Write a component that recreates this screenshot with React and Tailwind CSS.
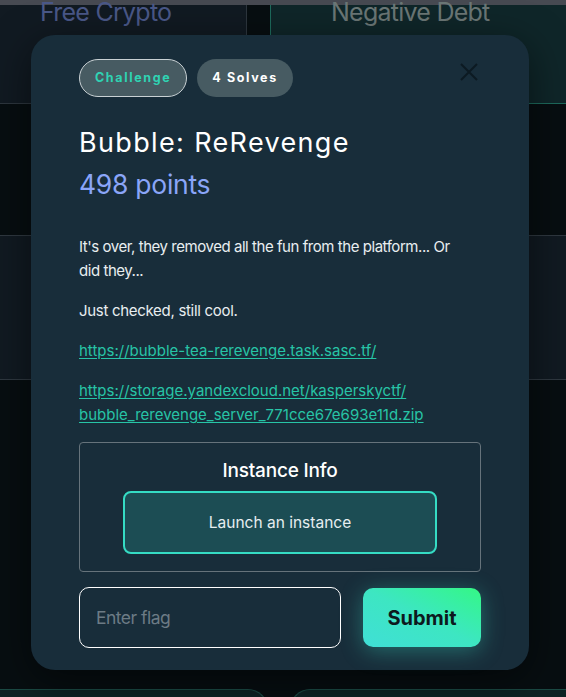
import React, { useState } from 'react';

const font = { fontFamily: 'Inter, "Noto Sans", sans-serif' };

const CloseIcon = () => (
    <svg width="20" height="20" viewBox="0 0 20 20" fill="none" stroke="#0c1a22" strokeWidth="2">
        <path d="M2 2L18 18M18 2L2 18" />
    </svg>
);

const ChallengeModal = () => {
    const [flag, setFlag] = useState("");

    return (
        <div className="absolute left-[31px] top-[35px] w-[498px] h-[635px] rounded-[24px] bg-[#182d3a] shadow-[0_10px_40px_rgba(0,0,0,0.5)] px-[48px] pt-[24px]">
            <div className="flex items-center justify-between">
                <div className="flex gap-[10px]">
                    <span className="h-[38px] px-[15px] flex items-center rounded-full border border-[#c9d1d4] bg-[#475b62] text-[#2fd3b3] text-[12.5px] font-bold tracking-[0.13em]">
                        Challenge
                    </span>
                    <span className="h-[38px] px-[15px] flex items-center rounded-full bg-[#475b62] text-white text-[12.5px] font-bold tracking-[0.13em]">
                        4 Solves
                    </span>
                </div>
                <button className="mr-[2px] mt-[-12px]">
                    <CloseIcon />
                </button>
            </div>

            <h2 className="mt-[29px] text-[27px] leading-[34px] font-normal text-white tracking-[0.05em]">Bubble: ReRevenge</h2>
            <p className="mt-[9px] text-[26.5px] leading-[30px] text-[#8aa5f8] tracking-[-0.01em]">498 points</p>

            <div className="mt-[36px] text-[15px] leading-[24px] text-[#e8eef0] space-y-[16px]">
                <p className="w-[395px] tracking-[-0.03em]">It's over, they removed all the fun from the platform... Or did they...</p>
                <p className="tracking-[-0.02em]">Just checked, still cool.</p>
                <p>
                    <a href="#" className="text-[#27c4a6] underline underline-offset-2">https://bubble-tea-rerevenge.task.sasc.tf/</a>
                </p>
                <p className="w-[370px]">
                    <a href="#" className="text-[#27c4a6] underline underline-offset-2">https://storage.yandexcloud.net/kasperskyctf/ bubble_rerevenge_server_771cce67e693e11d.zip</a>
                </p>
            </div>

            <div className="mt-[15px] h-[130px] border border-[#66737b] rounded-[4px] flex flex-col items-center pt-[16px]">
                <h3 className="text-[19px] leading-[24px] font-medium text-white tracking-[-0.01em]">Instance Info</h3>
                <button className="mt-[8px] w-[314px] h-[63px] rounded-[8px] border-2 border-[#35dcc4] bg-[#1c4d54] text-[15.5px] text-[#e6eef0]">
                    Launch an instance
                </button>
            </div>

            <div className="mt-[15px] flex items-center justify-between">
                <input
                    type="text"
                    placeholder="Enter flag"
                    value={flag}
                    onChange={(e) => setFlag(e.target.value)}
                    className="w-[262px] h-[61px] rounded-[10px] border border-white bg-transparent px-[16px] text-[17.5px] text-white placeholder-[#6c7b85] outline-none tracking-[-0.03em]"
                />
                <button className="w-[118px] h-[59px] rounded-[10px] bg-gradient-to-tr from-[#40dfd6] via-[#3de6c2] to-[#35f783] text-[20px] font-bold text-[#0d1a1e] shadow-[0_4px_22px_rgba(60,225,200,0.35)]">
                    Submit
                </button>
            </div>
        </div>
    );
};

export default function App() {
    return (
        <div className="relative w-[566px] h-[697px] overflow-hidden bg-[#070e11]" style={font}>
            {/* page behind the overlay */}
            <div className="h-[5px] bg-[#474a52]" />
            <div className="grid grid-cols-[247px_296px] gap-x-[23px]">
                <div className="h-[99px] bg-[#111a22] border-r border-b border-[#2d363e] pl-[40px]">
                    <div className="mt-[-10px] text-[25px] leading-[34px] tracking-[-0.03em] text-[#4a5888]">Free Crypto</div>
                </div>
                <div className="h-[99px] bg-[#0f2629] border-l border-b border-[#1d6a5c] pl-[60px]">
                    <div className="mt-[-10px] text-[25px] leading-[34px] tracking-[-0.03em] text-[#6b7776]">Negative Debt</div>
                </div>

                <div className="h-[131px] bg-[#070e11]" />
                <div className="h-[131px] bg-[#070e11]" />

                <div className="h-[145px] bg-[#111a22] border-y border-[#2f3840]" />
                <div className="h-[145px] bg-[#111a22] border-y border-[#2f3840]" />

                <div className="h-[309px] bg-[#070e11]" />
                <div className="h-[309px] bg-[#070e11]" />
            </div>
            <div className="flex gap-[22px]">
                <div className="w-[268px] h-[20px] rounded-tr-[24px] bg-[#0d2224] border-t border-r border-[#1b4a44]" />
                <div className="flex-1 h-[20px] rounded-tl-[24px] bg-[#0d2224] border-t border-l border-[#1b4a44]" />
            </div>

            <ChallengeModal />
        </div>
    );
}
